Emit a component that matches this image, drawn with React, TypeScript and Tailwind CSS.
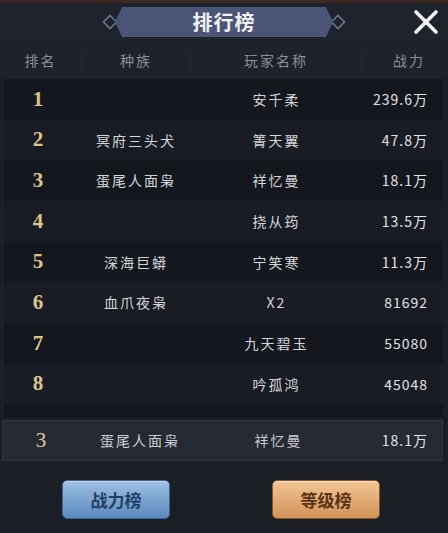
import React from "react";

type Row = { rank: number; race: string; name: string; power: string };

const rows: Row[] = [
  { rank: 1, race: "", name: "安千柔", power: "239.6万" },
  { rank: 2, race: "冥府三头犬", name: "箐天翼", power: "47.8万" },
  { rank: 3, race: "蛋尾人面枭", name: "祥忆曼", power: "18.1万" },
  { rank: 4, race: "", name: "挠从筠", power: "13.5万" },
  { rank: 5, race: "深海巨蟒", name: "宁笑寒", power: "11.3万" },
  { rank: 6, race: "血爪夜枭", name: "X2", power: "81692" },
  { rank: 7, race: "", name: "九天碧玉", power: "55080" },
  { rank: 8, race: "", name: "吟孤鸿", power: "45048" },
];

const cjk = "font-['Noto_Sans_CJK_SC','Noto_Sans',sans-serif]";

function Diamond() {
  return (
    <svg width="16" height="16" viewBox="0 0 16 16" className="shrink-0">
      <path d="M8 1.5 L14.5 8 L8 14.5 L1.5 8 Z" fill="#1f232c" stroke="#6c7896" strokeWidth="1.6" />
    </svg>
  );
}

function DataRow({ row, dark }: { row: Row; dark: boolean }) {
  return (
    <div className={`flex h-[40.7px] shrink-0 items-center ${dark ? "bg-[#14171e]" : "bg-[#191c24]"}`}>
      <div className="w-[70px] text-center font-['Liberation_Serif',serif] text-[21px] font-bold text-[#dcc58a]">
        {row.rank}
      </div>
      <div className="w-[126px] text-center text-[14px] tracking-[2px] text-[#d4d6da]">{row.race}</div>
      <div className="w-[155px] text-center text-[14px] tracking-[2px] text-[#d4d6da]">{row.name}</div>
      <div className="flex-1 pr-[15px] text-right text-[14px] tracking-[1px] text-[#e2e3e6]">{row.power}</div>
    </div>
  );
}

export default function App() {
  return (
    <div className={`flex h-[533px] w-[448px] flex-col overflow-hidden bg-[#1b1e25] ${cjk}`}>
      <div className="h-[3px] bg-[#3b2a24]" />
      <div className="relative flex h-[38px] items-center justify-center bg-[#1f232b]">
        <div className="flex items-center">
          <Diamond />
          <div className="-mx-[3px] flex h-[30px] w-[218px] items-center justify-center bg-[#4b5577] [clip-path:polygon(7px_0,calc(100%-7px)_0,100%_50%,calc(100%-7px)_100%,7px_100%,0_50%)]">
            <span className="text-[20px] font-bold tracking-[1px] text-[#f1f2f5]">排行榜</span>
          </div>
          <Diamond />
        </div>
        <svg className="absolute right-[9px] top-[6px]" width="26" height="26" viewBox="0 0 26 26">
          <path d="M3 3 L23 23 M23 3 L3 23" stroke="#f4f4f6" strokeWidth="3.6" strokeLinecap="round" />
        </svg>
      </div>

      <div className="flex h-[38px] items-center bg-[#1e222a] text-[14px] tracking-[2px] text-[#8a8f9b]">
        <div className="w-[82px] border-r border-[#262a33] text-center">排名</div>
        <div className="w-[109px] border-r border-[#262a33] text-center">种族</div>
        <div className="w-[171px] border-r border-[#262a33] text-center">玩家名称</div>
        <div className="flex-1 pl-[8px] text-center">战力</div>
      </div>

      <div className="ml-[2px] mr-[5px] flex h-[339px] flex-col overflow-hidden border-l border-[#22262f]">
        {rows.map((r, i) => (
          <DataRow key={r.rank} row={r} dark={i % 2 === 0} />
        ))}
        <div className="h-[40.7px] shrink-0 bg-[#14171e]" />
      </div>

      <div className="ml-[2px] mr-[5px] mt-[2px] flex h-[41px] items-center border border-[#30343f] bg-[#262a34]">
        <div className="w-[76px] text-center font-['Liberation_Serif',serif] text-[21px] text-[#e0cc94]">3</div>
        <div className="w-[122px] text-center text-[14px] tracking-[2px] text-[#c9ccd2]">蛋尾人面枭</div>
        <div className="w-[155px] text-center text-[14px] tracking-[2px] text-[#c9ccd2]">祥忆曼</div>
        <div className="flex-1 pr-[14px] text-right text-[14px] tracking-[1px] text-[#e2e3e6]">18.1万</div>
      </div>

      <div className="mt-[19px] flex items-center">
        <button
          type="button"
          className="ml-[62px] flex h-[39px] w-[108px] items-center justify-center rounded-[5px] border border-[#3c6390] bg-gradient-to-b from-[#9dc0e4] to-[#5c89bd] text-[17px] font-bold text-[#213f63] shadow-[inset_0_1px_0_rgba(255,255,255,0.45)]"
        >
          战力榜
        </button>
        <button
          type="button"
          className="ml-[102px] flex h-[39px] w-[108px] items-center justify-center rounded-[5px] border border-[#8a5528] bg-gradient-to-b from-[#f3c796] to-[#cf9257] text-[17px] font-bold text-[#5d3214] shadow-[inset_0_1px_0_rgba(255,255,255,0.45)]"
        >
          等级榜
        </button>
      </div>
    </div>
  );
}
